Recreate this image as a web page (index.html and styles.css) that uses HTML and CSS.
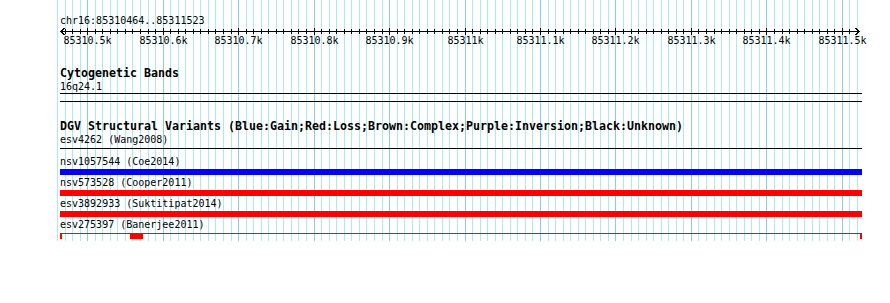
FILE: index.html
```html
<!DOCTYPE html>
<html lang="en">
<head>
  <meta charset="UTF-8">
  <title>chr16:85310464..85311523</title>
  <link rel="stylesheet" href="styles.css">
</head>
<body>
  <div class="panel">
    <!-- grid: one line every 10 bp, darker every 100 bp -->
    <svg class="grid" width="890" height="241">
      <path class="minor" d="M57.5 0V241M65.5 0V241M72.5 0V241M80.5 0V241M95.5 0V241M102.5 0V241M110.5 0V241M117.5 0V241M125.5 0V241M132.5 0V241M140.5 0V241M148.5 0V241M155.5 0V241M170.5 0V241M178.5 0V241M185.5 0V241M193.5 0V241M200.5 0V241M208.5 0V241M215.5 0V241M223.5 0V241M231.5 0V241M246.5 0V241M253.5 0V241M261.5 0V241M268.5 0V241M276.5 0V241M283.5 0V241M291.5 0V241M298.5 0V241M306.5 0V241M321.5 0V241M329.5 0V241M336.5 0V241M344.5 0V241M351.5 0V241M359.5 0V241M366.5 0V241M374.5 0V241M382.5 0V241M397.5 0V241M404.5 0V241M412.5 0V241M419.5 0V241M427.5 0V241M434.5 0V241M442.5 0V241M449.5 0V241M457.5 0V241M472.5 0V241M480.5 0V241M487.5 0V241M495.5 0V241M502.5 0V241M510.5 0V241M517.5 0V241M525.5 0V241M532.5 0V241M548.5 0V241M555.5 0V241M563.5 0V241M570.5 0V241M578.5 0V241M585.5 0V241M593.5 0V241M600.5 0V241M608.5 0V241M623.5 0V241M631.5 0V241M638.5 0V241M646.5 0V241M653.5 0V241M661.5 0V241M668.5 0V241M676.5 0V241M683.5 0V241M698.5 0V241M706.5 0V241M714.5 0V241M721.5 0V241M729.5 0V241M736.5 0V241M744.5 0V241M751.5 0V241M759.5 0V241M774.5 0V241M782.5 0V241M789.5 0V241M797.5 0V241M804.5 0V241M812.5 0V241M819.5 0V241M827.5 0V241M834.5 0V241M849.5 0V241M857.5 0V241"/>
      <path class="major" d="M87.5 0V241M163.5 0V241M238.5 0V241M314.5 0V241M389.5 0V241M465.5 0V241M540.5 0V241M615.5 0V241M691.5 0V241M766.5 0V241M842.5 0V241"/>
    </svg>

    <div class="track ruler-track">
      <div class="label chr">chr16:85310464..85311523</div>
      <svg class="ruler" width="890" height="20">
        <path class="axis" d="M60 4.5H860M64.5 1L61 4.5L64.5 8M855.5 1L859 4.5L855.5 8"/>
        <path class="axis" d="M65.5 2v5M72.5 2v5M80.5 2v5M95.5 2v5M102.5 2v5M110.5 2v5M117.5 2v5M125.5 2v5M132.5 2v5M140.5 2v5M148.5 2v5M155.5 2v5M170.5 2v5M178.5 2v5M185.5 2v5M193.5 2v5M200.5 2v5M208.5 2v5M215.5 2v5M223.5 2v5M231.5 2v5M246.5 2v5M253.5 2v5M261.5 2v5M268.5 2v5M276.5 2v5M283.5 2v5M291.5 2v5M298.5 2v5M306.5 2v5M321.5 2v5M329.5 2v5M336.5 2v5M344.5 2v5M351.5 2v5M359.5 2v5M366.5 2v5M374.5 2v5M382.5 2v5M397.5 2v5M404.5 2v5M412.5 2v5M419.5 2v5M427.5 2v5M434.5 2v5M442.5 2v5M449.5 2v5M457.5 2v5M472.5 2v5M480.5 2v5M487.5 2v5M495.5 2v5M502.5 2v5M510.5 2v5M517.5 2v5M525.5 2v5M532.5 2v5M548.5 2v5M555.5 2v5M563.5 2v5M570.5 2v5M578.5 2v5M585.5 2v5M593.5 2v5M600.5 2v5M608.5 2v5M623.5 2v5M631.5 2v5M638.5 2v5M646.5 2v5M653.5 2v5M661.5 2v5M668.5 2v5M676.5 2v5M683.5 2v5M698.5 2v5M706.5 2v5M714.5 2v5M721.5 2v5M729.5 2v5M736.5 2v5M744.5 2v5M751.5 2v5M759.5 2v5M774.5 2v5M782.5 2v5M789.5 2v5M797.5 2v5M804.5 2v5M812.5 2v5M819.5 2v5M827.5 2v5M834.5 2v5M849.5 2v5M857.5 2v5"/>
        <path class="axis" d="M87.5 1v7M163.5 1v7M238.5 1v7M314.5 1v7M389.5 1v7M465.5 1v7M540.5 1v7M615.5 1v7M691.5 1v7M766.5 1v7M842.5 1v7"/>
        <text x="87.5" y="17">85310.5k</text>
        <text x="163.5" y="17">85310.6k</text>
        <text x="238.5" y="17">85310.7k</text>
        <text x="314.5" y="17">85310.8k</text>
        <text x="389.5" y="17">85310.9k</text>
        <text x="465.5" y="17">85311k</text>
        <text x="540.5" y="17">85311.1k</text>
        <text x="615.5" y="17">85311.2k</text>
        <text x="691.5" y="17">85311.3k</text>
        <text x="766.5" y="17">85311.4k</text>
        <text x="842.5" y="17">85311.5k</text>
      </svg>
    </div>

    <div class="track cyto">
      <div class="title">Cytogenetic Bands</div>
      <div class="label">16q24.1</div>
      <div class="band"></div>
    </div>

    <div class="track dgv">
      <div class="title">DGV Structural Variants (Blue:Gain;Red:Loss;Brown:Complex;Purple:Inversion;Black:Unknown)</div>

      <div class="feature">
        <div class="label">esv4262 (Wang2008)</div>
        <div class="glyph"><div class="stroke unknown"></div></div>
      </div>

      <div class="feature">
        <div class="label">nsv1057544 (Coe2014)</div>
        <div class="glyph gain"></div>
      </div>

      <div class="feature">
        <div class="label">nsv573528 (Cooper2011)</div>
        <div class="glyph loss"></div>
      </div>

      <div class="feature">
        <div class="label">esv3892933 (Suktitipat2014)</div>
        <div class="glyph loss"></div>
      </div>

      <div class="feature">
        <div class="label">esv275397 (Banerjee2011)</div>
        <div class="glyph">
          <div class="stroke loss"></div>
          <div class="block loss" style="left: 0; width: 2px;"></div>
          <div class="block loss" style="left: 70px; width: 13px;"></div>
          <div class="block loss" style="left: 800px; width: 2px;"></div>
        </div>
      </div>
    </div>
  </div>
</body>
</html>
```

FILE: styles.css
```css
* {
  margin: 0;
  padding: 0;
  box-sizing: border-box;
}

body {
  background: #fff;
  color: #000;
  font-family: "DejaVu Sans Mono", monospace;
  font-size: 10px;
}

.panel {
  position: relative;
  width: 890px;
  height: 303px;
  overflow: hidden;
  isolation: isolate;
}

.grid {
  position: absolute;
  top: 0;
  left: 0;
  z-index: -1;
  shape-rendering: crispEdges;
}

.grid path {
  fill: none;
  stroke-width: 1;
}

.grid .minor {
  stroke: #aaeaf0;
}

.grid .major {
  stroke: #87ceeb;
}

.track {
  width: 862px;
  padding-left: 60px;
}

.label {
  line-height: 13px;
  white-space: pre;
}

.title {
  font-weight: bold;
  font-size: 11.63px;
  line-height: 13px;
  white-space: pre;
}

/* ruler */
.ruler-track {
  padding-top: 14px;
  padding-left: 0;
  width: 890px;
}

.chr {
  margin-left: 60px;
}

.ruler {
  display: block;
}

.ruler .axis {
  fill: none;
  stroke: #000;
  stroke-width: 1;
  shape-rendering: crispEdges;
}

.ruler text {
  font-family: "DejaVu Sans Mono", monospace;
  font-size: 10px;
  text-anchor: middle;
  fill: #000;
}

/* cytogenetic bands */
.cyto {
  margin-top: 20px;
}

.band {
  height: 9px;
  border-top: 1px solid #000;
  border-bottom: 1px solid #000;
}

/* structural variants */
.dgv {
  margin-top: 18px;
}

.glyph {
  position: relative;
  height: 6px;
  margin: 1px 0;
}

.glyph.gain {
  background: #0000ff;
}

.glyph.loss {
  background: #ff0000;
}

.stroke {
  height: 1px;
  margin-top: 2px;
}

.stroke.unknown {
  background: #000;
}

.stroke.loss {
  background: #ff0000;
}

.block {
  position: absolute;
  top: 0;
  height: 6px;
}

.block.loss {
  background: #ff0000;
}
```
